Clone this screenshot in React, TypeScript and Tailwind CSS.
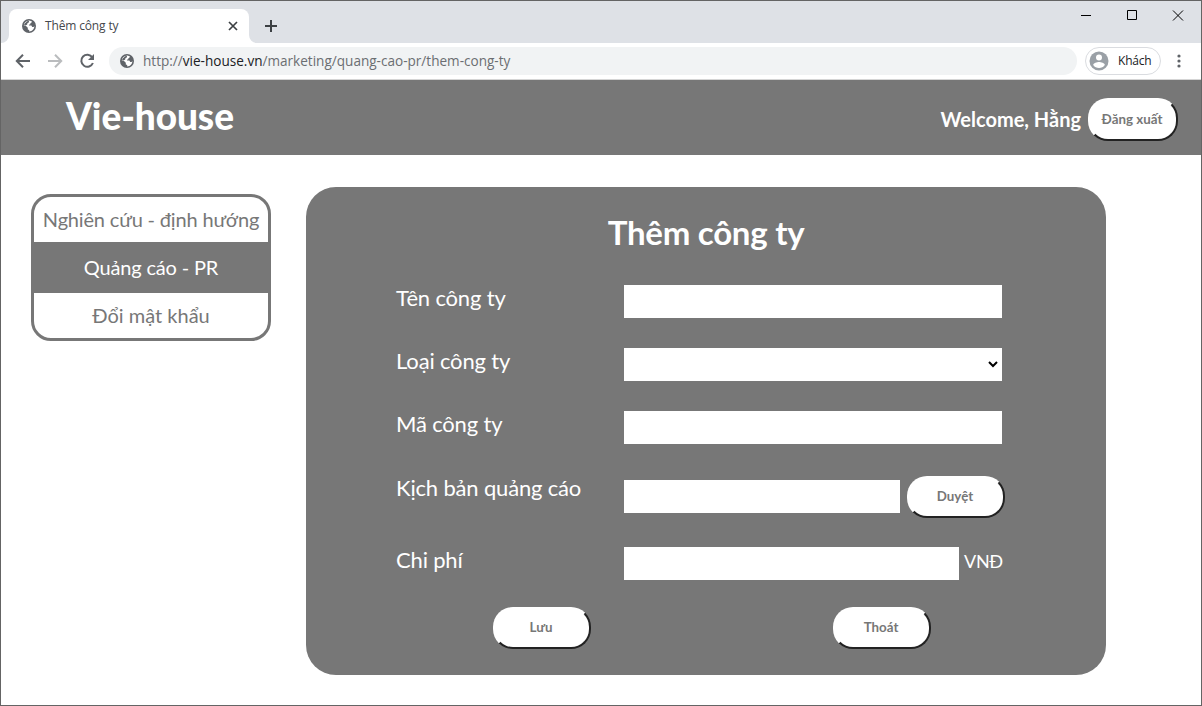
import type { ReactNode } from "react";

const lato = "font-[Lato,'Liberation_Sans',sans-serif]";
const ui = "font-['Open_Sans','Noto_Sans',sans-serif]";

function Globe() {
  return (
    <svg className="size-[14px] shrink-0" viewBox="0 0 14 14">
      <circle cx="7" cy="7" r="7" fill="#5f6368" />
      <path
        d="M7.2 1.5L9.8 2.2L9.6 3.4L8.4 4.2L8.3 5.2L6.9 5.7L7 6.6H9.4L10.2 8H11.6L12.4 7C12.4 9.9 10.2 12.4 7.2 12.5V11L5.8 10.4V8.8L4 7L1.8 6.6C2 4 4.2 1.6 7.2 1.5Z"
        fill="#fff"
      />
      <path d="M3 4.2L5.2 2.2L6.9 1.7L7 3.2L5.4 4.2L5.2 5.6L3.6 6.6L1.8 6.2Z" fill="#5f6368" />
    </svg>
  );
}

function OutsetButton({ size, children }: { size: string; children: ReactNode }) {
  return (
    <button
      className={`${size} shrink-0 rounded-[20px] border-2 border-t-white border-l-white border-r-[#222] border-b-[#222] bg-white pr-[2px] text-center text-[13.33px] font-bold text-[#777]`}
    >
      {children}
    </button>
  );
}

function Row({ label, className, children }: { label: string; className: string; children: ReactNode }) {
  return (
    <div className={`flex ${className}`}>
      <label className="w-[228px] shrink-0 text-[22px] leading-[25px] tracking-[-0.17px] text-white">{label}</label>
      {children}
    </div>
  );
}

function TabStrip() {
  return (
    <div className="flex h-[42px] bg-[#dee1e6]">
      <svg className="mt-[34px] h-2 w-2" viewBox="0 0 8 8">
        <path d="M8 0V8H0A8 8 0 0 0 8 0Z" fill="#fff" />
      </svg>
      <div className="mt-2 flex h-[34px] w-60 items-center rounded-t-lg bg-white pr-[11px] pl-[13px]">
        <Globe />
        <span className="ml-[9px] grow text-[12px] tracking-[-0.15px] text-[#45484c]">Thêm công ty</span>
        <svg className="size-[10px]" viewBox="0 0 10 10">
          <path d="M1 1L9 9M9 1L1 9" stroke="#3c4043" strokeWidth="1.7" />
        </svg>
      </div>
      <svg className="mt-[34px] h-2 w-2" viewBox="0 0 8 8">
        <path d="M0 0V8H8A8 8 0 0 1 0 0Z" fill="#fff" />
      </svg>
      <svg className="mt-[19px] ml-2 size-3" viewBox="0 0 12 12">
        <path d="M6 0V12M0 6H12" stroke="#3c4043" strokeWidth="2" />
      </svg>
      <svg className="mt-[9px] mr-[17px] ml-auto h-[11px] w-[104px]" viewBox="0 0 104 11" fill="none" stroke="#000">
        <path d="M1 5.5H11M47.5 0.5H56.5V9.5H47.5Z" />
        <path d="M93 0.5L103 10.5M103 0.5L93 10.5" />
      </svg>
    </div>
  );
}

function Toolbar() {
  return (
    <div className="flex h-[37px] items-center border-b border-[#d5d5d5] bg-white">
      <svg className="ml-[14px] h-4 w-[80px]" viewBox="0 0 80 16" fill="none" strokeWidth="2">
        <path d="M15 8H2M8 1.8L1.8 8L8 14.2" stroke="#5f6368" />
        <path d="M33 8H46M40 1.8L46.2 8L40 14.2" stroke="#babcbe" />
        <path d="M77.3 4.4A6 6 0 1 0 77.9 10" stroke="#5f6368" />
        <path d="M79 1V7H73Z" fill="#5f6368" />
      </svg>
      <div className="ml-[14px] flex h-7 w-[968px] items-center rounded-full bg-[#f1f3f4] pl-[11px]">
        <Globe />
        <span className="ml-[9px] text-[13.57px] text-[#6b6e72]">
          http://<span className="text-[#202124]">vie-house.vn</span>/marketing/quang-cao-pr/them-cong-ty
        </span>
      </div>
      <div className="ml-2 flex h-7 w-[76px] items-center rounded-full border border-[#dadce0] pl-[3px]">
        <svg className="size-5" viewBox="0 0 20 20">
          <circle cx="10" cy="10" r="9.5" fill="#9aa0a6" />
          <circle cx="10" cy="6.6" r="3" fill="#fff" />
          <path d="M4.2 14C4.2 12 8 11 10 11S15.8 12 15.8 14A7 7 0 0 1 4.2 14Z" fill="#fff" />
        </svg>
        <span className="ml-[9px] text-[12px] tracking-[-0.2px] text-[#202124]">Khách</span>
      </div>
      <svg className="ml-[16px] h-[14px] w-1" viewBox="0 0 4 14" fill="#5f6368">
        <circle cx="2" cy="2" r="1.6" />
        <circle cx="2" cy="7" r="1.6" />
        <circle cx="2" cy="12" r="1.6" />
      </svg>
    </div>
  );
}

export default function App() {
  return (
    <div className="flex h-[706px] w-[1202px] flex-col overflow-hidden border border-[#646464] bg-white">
      <div className={ui}>
        <TabStrip />
        <Toolbar />
      </div>
      <div className={`${lato} flex grow flex-col`}>
        <header className="flex h-[75px] items-center bg-[#777] pt-[3px] pr-[23px] pl-[65px] text-white">
          <h1 className="grow pb-[8px] text-[37px] leading-none font-black tracking-[-0.1px]">Vie-house</h1>
          <span className="mr-[7px] text-[20px] font-bold">Welcome, Hằng</span>
          <OutsetButton size="h-[43px] w-[90px] pt-px">Đăng xuất</OutsetButton>
        </header>
        <main className="flex items-start">
          <nav className="mt-[39px] ml-[30px] flex h-[147px] w-60 flex-col rounded-[20px] border-3 border-[#777] text-center text-[20px] tracking-[-0.17px] text-[#777]">
            <a className="h-[45px] leading-[44px] whitespace-nowrap">Nghiên cứu - định hướng</a>
            <a className="h-[51px] bg-[#777] leading-[50px] text-white">Quảng cáo - PR</a>
            <a className="h-[45px] leading-[44px] tracking-normal">Đổi mật khẩu</a>
          </nav>
          <section className="mt-8 ml-[35px] h-[488px] w-[800px] rounded-[30px] bg-[#777] pl-[90px]">
            <h2 className="mt-[25px] mr-[90px] text-center text-[33px] leading-[40px] font-bold tracking-[-0.25px] text-white">
              Thêm công ty
            </h2>
            <Row label="Tên công ty" className="mt-[33px] h-[63px]">
              <input className="h-[33px] w-[378px] bg-white" />
            </Row>
            <Row label="Loại công ty" className="h-[63px]">
              <div className="flex h-[33px] w-[378px] items-center justify-end bg-white pr-1">
                <svg className="h-[7px] w-[10px]" viewBox="0 0 10 7">
                  <path d="M1 1L5 5L9 1" fill="none" stroke="#000" strokeWidth="2" />
                </svg>
              </div>
            </Row>
            <Row label="Mã công ty" className="h-[64px]">
              <input className="h-[33px] w-[378px] bg-white" />
            </Row>
            <Row label="Kịch bản quảng cáo" className="h-[72px]">
              <input className="mt-[5px] mr-[7px] h-[33px] w-[276px] bg-white" />
              <OutsetButton size="mt-px h-[42px] w-[98px]">Duyệt</OutsetButton>
            </Row>
            <Row label="Chi phí" className="h-[60px]">
              <input className="h-[33px] w-[335px] bg-white" />
              <span className="ml-[5px] text-[18px] leading-[28px] tracking-[-0.3px] text-white">VNĐ</span>
            </Row>
            <div className="ml-[97px] flex gap-[242px]">
              <OutsetButton size="h-[42px] w-[98px]">Lưu</OutsetButton>
              <OutsetButton size="h-[42px] w-[98px]">Thoát</OutsetButton>
            </div>
          </section>
        </main>
      </div>
    </div>
  );
}
